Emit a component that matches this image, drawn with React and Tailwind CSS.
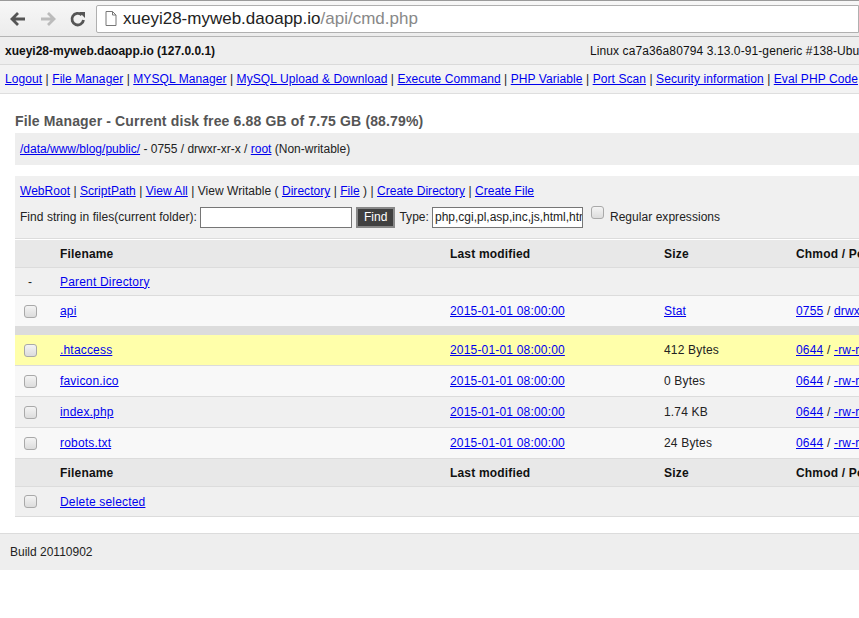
import React from "react";

const font = { fontFamily: '"Liberation Sans", Arial, sans-serif' };

function Box() {
  return (
    <span className="inline-block w-[13px] h-[13px] rounded-[3px] border border-[#a9a9a9] bg-gradient-to-b from-[#f4f4f4] to-[#dcdcdc]" />
  );
}

function L({ children }) {
  return <a className="text-[#0000ee] underline cursor-pointer">{children}</a>;
}

const navLinks = [
  "Logout",
  "File Manager",
  "MYSQL Manager",
  "MySQL Upload & Download",
  "Execute Command",
  "PHP Variable",
  "Port Scan",
  "Security information",
  "Eval PHP Code",
];

const files = [
  { name: ".htaccess", size: "412 Bytes", bg: "bg-[#ffffaa]" },
  { name: "favicon.ico", size: "0 Bytes", bg: "bg-[#f8f8f8]" },
  { name: "index.php", size: "1.74 KB", bg: "bg-[#f0f0f0]" },
  { name: "robots.txt", size: "24 Bytes", bg: "bg-[#f8f8f8]" },
];

const cols = "grid grid-cols-[45px_390px_214px_132px_200px] items-center";

function HeadRow() {
  return (
    <div className={`${cols} h-[28px] bg-[#e8e8e8] border-b border-[#dcdcdc] font-bold text-[#111]`}>
      <div />
      <div>Filename</div>
      <div>Last modified</div>
      <div>Size</div>
      <div className="whitespace-nowrap">Chmod / Perms</div>
    </div>
  );
}

export default function App() {
  return (
    <div style={font} className="w-[859px] h-[618px] overflow-hidden bg-white text-[12px] text-[#222]">
      {/* browser toolbar */}
      <div className="h-[37px] border-t border-[#9a9a9a] border-b border-b-[#b5b5b5] bg-gradient-to-b from-[#f7f7f7] to-[#ececec] flex items-center">
        <div className="flex items-center gap-[10px] pl-[8px] w-[96px]">
          <svg width="20" height="20" viewBox="0 0 20 20">
            <path d="M17 10H5M10 4l-6 6 6 6" fill="none" stroke="#555" strokeWidth="2.8" />
          </svg>
          <svg width="20" height="20" viewBox="0 0 20 20">
            <path d="M3 10h12M10 4l6 6-6 6" fill="none" stroke="#bbb" strokeWidth="2.8" />
          </svg>
          <svg width="20" height="20" viewBox="0 0 20 20">
            <path d="M15.5 11a5.8 5.8 0 1 1-1.8-5.1" fill="none" stroke="#555" strokeWidth="2.8" />
            <path d="M11 3h6v6z" fill="#555" />
          </svg>
        </div>
        <div className="flex-1 h-[28px] bg-white border border-[#b0b0b0] rounded-l-[2px] flex items-center pl-[8px] gap-[6px]">
          <svg width="12" height="15" viewBox="0 0 12 15">
            <path d="M1 .5h6.5L11 4v10.5H1z M7.5 .5V4H11" fill="none" stroke="#777" />
          </svg>
          <span className="text-[17px] text-[#222] whitespace-nowrap">
            xueyi28-myweb.daoapp.io<span className="text-[#888]">/api/cmd.php</span>
          </span>
        </div>
      </div>

      {/* host bar */}
      <div className="h-[28px] bg-[#eeeeee] border-b border-[#dadada] flex items-center justify-between pl-[5px] whitespace-nowrap">
        <b className="text-[#111]">xueyi28-myweb.daoapp.io (127.0.0.1)</b>
        <span className="w-[269px] overflow-hidden text-[#111] tracking-[0.1px]">Linux ca7a36a80794 3.13.0-91-generic #138-Ubuntu SMP</span>
      </div>

      {/* nav */}
      <div className="h-[29px] leading-[29px] bg-[#f3f3f3] border-b border-[#dedede] pl-[5px] whitespace-nowrap overflow-hidden tracking-[0.08px]">
        {navLinks.map((n, i) => (
          <React.Fragment key={n}>
            {i > 0 && <span className="text-[#222]">&nbsp;|&nbsp;</span>}
            <L>{n}</L>
          </React.Fragment>
        ))}
      </div>

      <div className="pl-[15px] pt-[17px]">
        <div className="text-[14px] font-bold text-[#555] whitespace-nowrap h-[20px] tracking-[0.14px]">
          File Manager - Current disk free 6.88 GB of 7.75 GB (88.79%)
        </div>
        <div className="h-[32px] bg-[#eeeeee] flex items-center pl-[5px] mt-[2px] whitespace-nowrap">
          <L>/data/www/blog/public/</L>&nbsp;- 0755 / drwxr-xr-x /&nbsp;<L>root</L>&nbsp;(Non-writable)
        </div>

        <div className="mt-[11px] bg-[#f0f0f0] pl-[5px] pt-[6px] h-[63px] border-b border-[#dcdcdc] tracking-[0.04px]">
          <div className="whitespace-nowrap">
            <L>WebRoot</L> | <L>ScriptPath</L> | <L>View All</L> | View Writable ( <L>Directory</L> | <L>File</L> ) | <L>Create Directory</L> | <L>Create File</L>
          </div>
          <div className="flex items-center mt-[6px] whitespace-nowrap">
            <span>Find string in files(current folder):</span>
            <span className="ml-[3px] w-[152px] h-[21px] bg-white border border-[#767676]" />
            <span className="ml-[4px] h-[21px] px-[6px] bg-[#404040] border-2 border-[#888] text-white flex items-center">Find</span>
            <span className="ml-[4px]">Type:</span>
            <span className="ml-[3px] w-[151px] h-[21px] bg-white border border-[#767676] flex items-center pl-[2px] overflow-hidden tracking-normal">php,cgi,pl,asp,inc,js,html,htm,jsp</span>
            <span className="ml-[8px] mb-[4px]"><Box /></span>
            <span className="ml-[6px]">Regular expressions</span>
          </div>
        </div>

        <div className="mt-[1px] tracking-[0.18px]">
          <HeadRow />
          <div className={`${cols} h-[28px] bg-[#f0f0f0] border-b border-[#dcdcdc]`}>
            <div className="pl-[13px]">-</div>
            <div><L>Parent Directory</L></div>
          </div>
          <div className={`${cols} h-[30px] bg-[#f8f8f8]`}>
            <div className="pl-[9px] flex"><Box /></div>
            <div><L>api</L></div>
            <div><L>2015-01-01 08:00:00</L></div>
            <div><L>Stat</L></div>
            <div className="whitespace-nowrap"><L>0755</L> / <L>drwxr-xr-x</L></div>
          </div>
          <div className="h-[9px] bg-[#dcdcdc]" />
          {files.map((f) => (
            <div key={f.name} className={`${cols} h-[31px] ${f.bg} border-b border-[#dcdcdc]`}>
              <div className="pl-[9px] flex"><Box /></div>
              <div><L>{f.name}</L></div>
              <div><L>2015-01-01 08:00:00</L></div>
              <div>{f.size}</div>
              <div className="whitespace-nowrap"><L>0644</L> / <L>-rw-r--r--</L></div>
            </div>
          ))}
          <HeadRow />
          <div className={`${cols} h-[30px] bg-[#f0f0f0] border-b border-[#dcdcdc]`}>
            <div className="pl-[9px] flex"><Box /></div>
            <div><L>Delete selected</L></div>
          </div>
        </div>
      </div>

      <div className="mt-[16px] h-[37px] bg-[#eeeeee] border-t border-[#dcdcdc] flex items-center pl-[10px]">
        Build 20110902
      </div>
    </div>
  );
}
